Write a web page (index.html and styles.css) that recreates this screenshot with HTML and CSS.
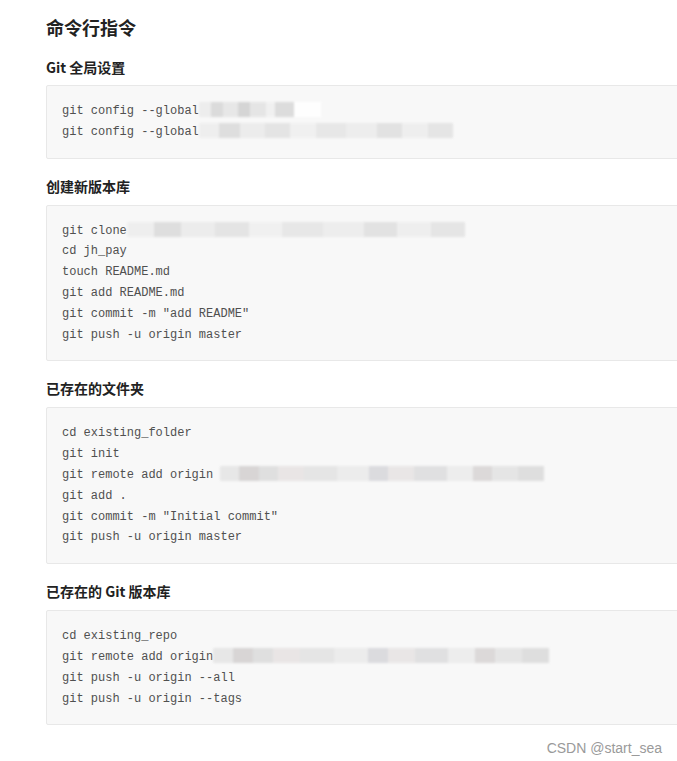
FILE: index.html
```html
<!DOCTYPE html>
<html lang="zh">
<head>
<meta charset="utf-8">
<link rel="stylesheet" href="styles.css">
</head>
<body>
<main class="page">
  <h1 class="title">命令行指令</h1>

  <section class="sec">
    <h3 class="sec-title">Git 全局设置</h3>
    <pre class="code">git config --global<span class="blur b1" style="width:122px"></span>
git config --global<span class="blur b2" style="width:254px"></span></pre>
  </section>

  <section class="sec">
    <h3 class="sec-title">创建新版本库</h3>
    <pre class="code">git clone<span class="blur b2" style="width:338px"></span>
cd jh_pay
touch README.md
git add README.md
git commit -m "add README"
git push -u origin master</pre>
  </section>

  <section class="sec">
    <h3 class="sec-title">已存在的文件夹</h3>
    <pre class="code">cd existing_folder
git init
git remote add origin <span class="blur b3" style="width:324px"></span>
git add .
git commit -m "Initial commit"
git push -u origin master</pre>
  </section>

  <section class="sec">
    <h3 class="sec-title">已存在的 Git 版本库</h3>
    <pre class="code">cd existing_repo
git remote add origin<span class="blur b3" style="width:336px"></span>
git push -u origin --all
git push -u origin --tags</pre>
  </section>

  <footer class="mark">CSDN @start_sea</footer>
</main>
</body>
</html>
```

FILE: styles.css
```css
html, body {
  margin: 0;
  padding: 0;
  background: #ffffff;
  overflow: hidden;
}

.page {
  padding: 14px 0 0 46px;
  font-family: "Microsoft YaHei", "Noto Sans CJK SC", "Noto Sans", sans-serif;
  color: #333333;
}

.title {
  margin: 0;
  font-size: 18px;
  line-height: 26px;
  font-weight: 700;
  color: #222222;
}

.sec {
  margin: 0;
}

.sec-title {
  margin: 12px 0 9px 0;
  font-size: 14px;
  line-height: 20px;
  font-weight: 700;
  color: #222222;
}

.sec:first-of-type .sec-title {
  margin-top: 17px;
  margin-bottom: 8px;
}

.code {
  margin: 0 -20px 17px 0;
  padding: 15px 15px;
  background: #f8f8f8;
  border: 1px solid #e8e8e8;
  border-radius: 2px;
  font-family: "Liberation Mono", "DejaVu Sans Mono", monospace;
  font-size: 12px;
  line-height: 20.8px;
  color: #505050;
  white-space: pre;
}

.blur {
  display: inline-block;
  height: 15px;
  vertical-align: -3px;
  filter: blur(1.2px);
  opacity: 0.9;
}

.b1 {
  background:
    linear-gradient(90deg, #ececec 0 10%, #d8d8d8 10% 20%, #e6e6e6 20% 32%, #d2d2d2 32% 42%, #e4e4e4 42% 55%, #f0f0f0 55% 62%, #d9d9d9 62% 78%, #ffffff 78%);
}

.b2 {
  background:
    linear-gradient(90deg, #eeeeee 0 8%, #dcdcdc 8% 16%, #ebebeb 16% 26%, #e2e2e2 26% 36%, #f0f0f0 36% 46%, #e6e6e6 46% 58%, #ececec 58% 70%, #e0e0e0 70% 80%, #eeeeee 80% 90%, #e3e3e3 90%);
}

.b3 {
  background:
    linear-gradient(90deg, #e6e6e6 0 6%, #d5d2d2 6% 12%, #dddddd 12% 18%, #e8e4e4 18% 26%, #e3e3e3 26% 36%, #ebebeb 36% 46%, #d8d8dc 46% 52%, #e8e5e5 52% 60%, #dededf 60% 70%, #ececec 70% 78%, #d9d6d6 78% 84%, #e4e4e4 84% 92%, #dcdcdc 92%);
}

.mark {
  margin: -4px 15px 0 0;
  text-align: right;
  font-family: "Liberation Sans", Arial, sans-serif;
  font-size: 14px;
  line-height: 20px;
  color: #9a9a9a;
}
```
